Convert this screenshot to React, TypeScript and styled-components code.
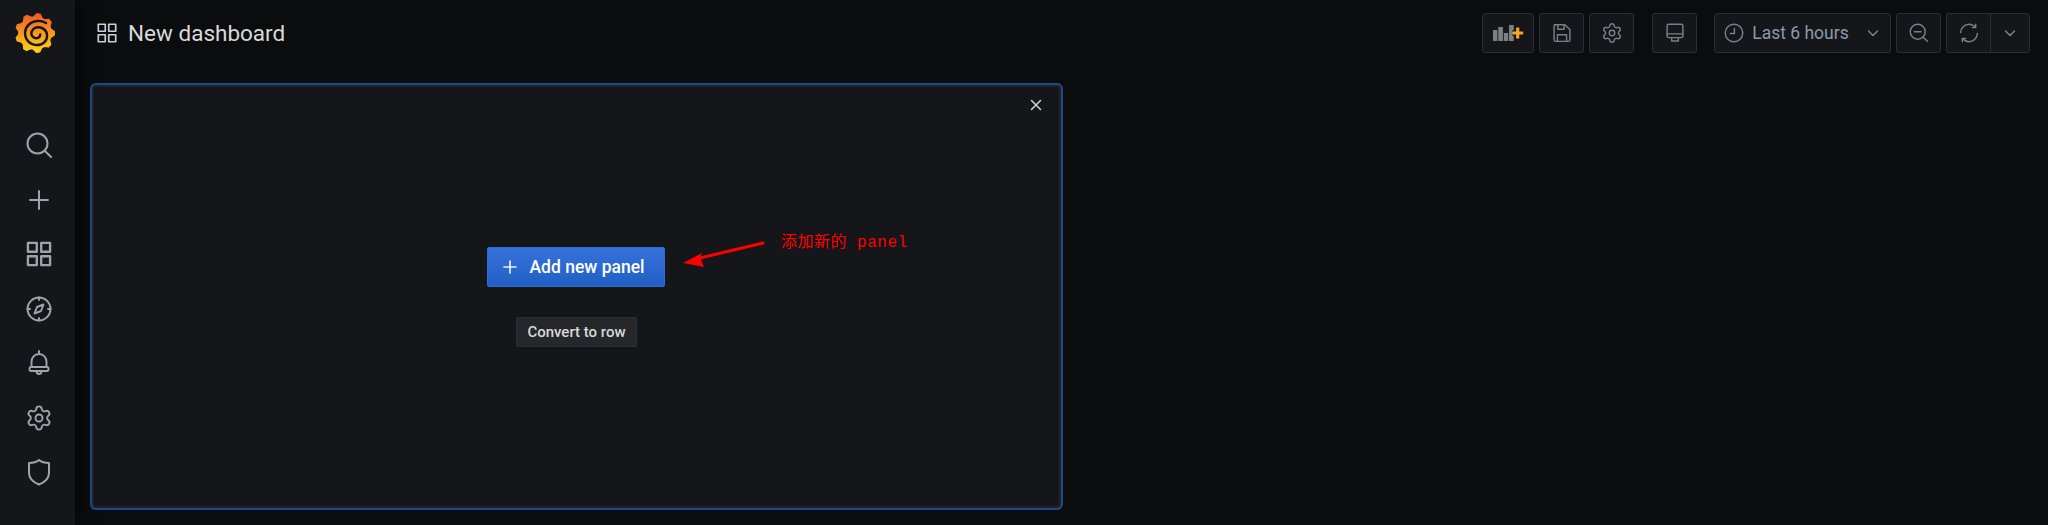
import React from "react";
import styled, { createGlobalStyle } from "styled-components";
import { Settings } from "lucide-react";

const Global = createGlobalStyle`
  html, body { margin: 0; padding: 0; height: 100%; background: #0b0c0e; overflow: hidden; }
  #root { height: 100%; }
  * { box-sizing: border-box; }
`;

const Page = styled.div`
  position: relative;
  display: flex;
  width: 2048px;
  height: 525px;
  overflow: hidden;
  background: #0b0c0e;
  font-family: Roboto, "Liberation Sans", sans-serif;
`;

const Sidebar = styled.nav`
  width: 75px;
  flex: none;
  background: #141619;
  box-shadow: 0 0 18px rgba(0, 0, 0, 0.75);
  display: flex;
  flex-direction: column;
  align-items: center;
  z-index: 1;
`;

const LogoSlot = styled.div`
  height: 118px;
  width: 100%;
  padding: 12px 0 0 15px;
  color: #141619;
`;

const NavItem = styled.div`
  width: 100%;
  height: 54.5px;
  display: flex;
  align-items: center;
  justify-content: center;
  padding-left: 3px;
  color: #9fa4ac;
`;

const Main = styled.main`
  flex: 1;
  min-width: 0;
  display: flex;
  flex-direction: column;
`;

const Header = styled.header`
  height: 83px;
  flex: none;
  display: flex;
  align-items: flex-start;
  justify-content: space-between;
  padding: 13px 18px 0 21px;
`;

const TitleBlock = styled.div`
  display: flex;
  align-items: center;
  gap: 10px;
  height: 40px;
  color: #c7d0d9;
`;

const Title = styled.h1`
  margin: 0;
  font-size: 22.5px;
  font-weight: 400;
  color: #d8d9da;
  line-height: 26px;
`;

const Toolbar = styled.div`
  display: flex;
  align-items: center;
  height: 40px;
`;

const ToolGroup = styled.div<{ $after?: number }>`
  display: flex;
  gap: 5px;
  margin-right: ${(p) => p.$after ?? 0}px;
`;

const ToolButton = styled.button<{ $w: number }>`
  width: ${(p) => p.$w}px;
  height: 40px;
  padding: 0;
  display: flex;
  align-items: center;
  justify-content: center;
  gap: 8px;
  background: #141619;
  border: 1px solid #2c2e33;
  border-radius: 3px;
  color: #7b8087;
  font-family: inherit;
`;

const Joined = styled.div`
  display: flex;
`;

const JoinedLeft = styled(ToolButton)`
  border-radius: 3px 0 0 3px;
  border-right: 0;
`;

const JoinedRight = styled(ToolButton)`
  border-radius: 0 3px 3px 0;
`;

const TimeLabel = styled.span`
  font-size: 17.5px;
  font-weight: 400;
  color: #8d9aab;
  margin-right: 8px;
`;

const Content = styled.div`
  padding-left: 15px;
`;

const Panel = styled.section`
  width: 973px;
  height: 427px;
  background: #141619;
  border-radius: 6px;
  box-shadow: inset 0 0 0 2px #1b4a8e, inset 0 0 0 4px #202226;
  padding: 12px 21px 0 0;
  display: flex;
  flex-direction: column;
  align-items: center;
`;

const CloseRow = styled.div`
  align-self: flex-end;
  height: 20px;
  display: flex;
  align-items: center;
  color: #c7d0d9;
`;

const AddButton = styled.button`
  margin: 132px 0 0 19px;
  width: 178px;
  height: 40px;
  display: flex;
  align-items: center;
  gap: 12px;
  padding: 0 0 0 14px;
  border: 1px solid #2f6bd0;
  border-radius: 2px;
  background: linear-gradient(180deg, #3871dc 0%, #1f60c4 100%);
  color: #fff;
  font-family: inherit;
  font-size: 17.5px;
  font-weight: 500;
  white-space: nowrap;
`;

const RowButton = styled.button`
  margin: 30px 0 0 21px;
  width: 121px;
  height: 30px;
  padding: 0;
  border: 1px solid #2c2e33;
  border-radius: 2px;
  background: #25272b;
  color: #d8d9da;
  font-family: inherit;
  font-size: 15px;
  font-weight: 500;
  white-space: nowrap;
`;

const Note = styled.span`
  position: absolute;
  left: 781px;
  top: 233px;
  color: #f00;
  font-family: "Liberation Mono", "Noto Sans CJK SC", monospace;
  font-size: 16px;
  font-weight: 400;
  line-height: 20px;
  letter-spacing: 0.5px;
  white-space: nowrap;
`;

const Arrow = styled.svg`
  position: absolute;
  left: 676px;
  top: 236px;
`;

const I = ({ s = 24, children }: { s?: number; children: React.ReactNode }) => (
  <svg width={s} height={s} viewBox="0 0 24 24" fill="none" stroke="currentColor" strokeWidth="1.7" strokeLinecap="round" strokeLinejoin="round">
    {children}
  </svg>
);

const gearPoints = (() => {
  const teeth = 9;
  const pts: string[] = [];
  for (let i = 0; i < teeth * 4; i++) {
    const a = (i / (teeth * 4)) * Math.PI * 2 - Math.PI / 2 + 0.1;
    const r = i % 4 === 0 || i % 4 === 1 ? 18.5 : 15.5;
    pts.push(`${(19 + r * Math.cos(a)).toFixed(2)},${(20 + r * Math.sin(a)).toFixed(2)}`);
  }
  return pts.join(" ");
})();

const Logo = () => (
  <svg width="40" height="42" viewBox="0 0 38 40" style={{ display: "block" }}>
    <defs>
      <linearGradient id="gf" x1="0" y1="1" x2="0" y2="0">
        <stop offset="0" stopColor="#fcd21f" />
        <stop offset="0.4" stopColor="#fba41c" />
        <stop offset="1" stopColor="#f05a28" />
      </linearGradient>
    </defs>
    <polygon points={gearPoints} fill="url(#gf)" stroke="url(#gf)" strokeWidth="1.2" strokeLinejoin="round" />
    <path d="M29.5 10.5 C27 9 24 8.3 21 8.5 C14.5 9 9.5 14 9.5 20 C9.5 26.5 14.5 31.5 21 31.5 C26.5 31.5 30.5 27.5 30.5 22.5 C30.5 17.5 26 14 21.5 14.5 C18 15 15.5 17.5 15.5 20.5 C15.5 23 18 25.2 20.5 25 C22.5 25 24 23.5 24 21.5" fill="none" stroke="currentColor" strokeWidth="2.3" strokeLinecap="round" />
  </svg>
);

const Chevron = ({ s = 16 }: { s?: number }) => (
  <svg width={s} height={s} viewBox="0 0 16 16" fill="none" stroke="currentColor" strokeWidth="1.6" strokeLinecap="round" strokeLinejoin="round">
    <path d="M3.5 6 L8 10.5 L12.5 6" />
  </svg>
);

const GridIcon = ({ s, w }: { s: number; w: number }) => (
  <svg width={s} height={s} viewBox="0 0 24 24" fill="none" stroke="currentColor" strokeWidth={w} strokeLinejoin="round">
    <rect x="2.5" y="2.5" width="7.6" height="7.6" />
    <rect x="13.9" y="2.5" width="7.6" height="7.6" />
    <rect x="2.5" y="13.9" width="7.6" height="7.6" />
    <rect x="13.9" y="13.9" width="7.6" height="7.6" />
  </svg>
);

const navIcons = [
  <svg key="s" width="28" height="28" viewBox="0 0 28 28" fill="none" stroke="currentColor" strokeWidth="2" strokeLinecap="round"><circle cx="12.5" cy="12.5" r="10" /><path d="M20 20 L26 26" /></svg>,
  <svg key="p" width="22" height="22" viewBox="0 0 22 22" fill="none" stroke="currentColor" strokeWidth="2" strokeLinecap="round"><path d="M11 2 V20 M2 11 H20" /></svg>,
  <GridIcon key="g" s={28} w={2} />,
  <svg key="c" width="26" height="26" viewBox="0 0 26 26" fill="none" stroke="currentColor" strokeWidth="1.9" strokeLinecap="round" strokeLinejoin="round"><circle cx="13" cy="13" r="11.5" /><path d="M17.5 8.5 L15 15 L8.5 17.5 L11 11 Z" /><path d="M13 1.5 V4 M13 22 V24.5 M1.5 13 H4 M22 13 H24.5" /></svg>,
  <svg key="b" width="24" height="26" viewBox="0 0 24 26" fill="none" stroke="currentColor" strokeWidth="1.9" strokeLinecap="round" strokeLinejoin="round"><path d="M12 1 V4 M4.5 17 V12 C4.5 7.5 7.5 4 12 4 C16.5 4 19.5 7.5 19.5 12 V17 M4 17 H20 C22 17 22 21 20 21 H4 C2 21 2 17 4 17 Z M9.5 21 C9.5 25 14.5 25 14.5 21" /></svg>,
  <Settings key="st" size={28} strokeWidth={1.6} />,
  <svg key="sh" width="24" height="28" viewBox="0 0 24 28" fill="none" stroke="currentColor" strokeWidth="2" strokeLinejoin="round"><path d="M12 2 C9 4.5 6 5 2 5 V15 C2 20.5 7 24.5 12 26.5 C17 24.5 22 20.5 22 15 V5 C18 5 15 4.5 12 2 Z" /></svg>,
];

export default function App() {
  return (
    <Page>
      <Global />
      <Sidebar>
        <LogoSlot><Logo /></LogoSlot>
        {navIcons.map((ic, i) => (
          <NavItem key={i}>{ic}</NavItem>
        ))}
      </Sidebar>
      <Main>
        <Header>
          <TitleBlock>
            <GridIcon s={22} w={1.8} />
            <Title>New dashboard</Title>
          </TitleBlock>
          <Toolbar>
            <ToolGroup $after={18}>
              <ToolButton $w={52}>
                <svg width="32" height="18" viewBox="0 0 32 18">
                  <g fill="#7b8087">
                    <rect x="1" y="6" width="4.4" height="11" />
                    <rect x="6.3" y="3" width="4.6" height="14" />
                    <rect x="11.8" y="9" width="4.4" height="8" />
                    <rect x="17" y="1" width="4.8" height="16" />
                  </g>
                  <path d="M25.7 3.5 V14.5 M20.2 9 H31.2" stroke="#141619" strokeWidth="5.5" />
                  <path d="M25.7 3.5 V14.5 M20.2 9 H31.2" stroke="#f5a623" strokeWidth="3.2" />
                </svg>
              </ToolButton>
              <ToolButton $w={45}>
                <I s={20}><path d="M3 2 H15.5 L21.5 8 V20 C21.5 21 21 22 19.5 22 H4.5 C3 22 2.5 21 2.5 20 V4 C2.5 3 3 2 4.5 2" /><path d="M7 2.2 V7.5 H14.5 V2.2 M6.5 22 V14 H17.5 V22" /></I>
              </ToolButton>
              <ToolButton $w={45}><Settings size={22} strokeWidth={1.6} /></ToolButton>
            </ToolGroup>
            <ToolGroup $after={17}>
              <ToolButton $w={45}>
                <I s={20}><rect x="2.5" y="1.5" width="19" height="16" rx="2" /><path d="M2.5 13 H21.5 M8 17.5 V21.5 H16 V17.5" /></I>
              </ToolButton>
            </ToolGroup>
            <ToolGroup>
              <ToolButton $w={177}>
                <I s={20}><circle cx="12" cy="12" r="10.5" /><path d="M12.5 6.5 V12.5 H7.5" /></I>
                <TimeLabel>Last 6 hours</TimeLabel>
                <Chevron />
              </ToolButton>
              <ToolButton $w={45}>
                <I s={20}><circle cx="10.5" cy="10.5" r="9" /><path d="M6.5 10.5 H14.5 M17 17 L22 22" /></I>
              </ToolButton>
              <Joined>
                <JoinedLeft $w={44}>
                  <I s={20}><path d="M20 5.5 V1.5 M20 5.5 H16 M20 5.5 C18 3 15 1.5 12 1.5 C6.5 1.5 2 6 2 11.5" /><path d="M4 18.5 V22.5 M4 18.5 H8 M4 18.5 C6 21 9 22.5 12 22.5 C17.5 22.5 22 18 22 12.5" /></I>
                </JoinedLeft>
                <JoinedRight $w={40}><Chevron /></JoinedRight>
              </Joined>
            </ToolGroup>
          </Toolbar>
        </Header>
        <Content>
          <Panel>
            <CloseRow>
              <svg width="12" height="12" viewBox="0 0 12 12" stroke="currentColor" strokeWidth="1.6" strokeLinecap="round"><path d="M1.5 1.5 L10.5 10.5 M10.5 1.5 L1.5 10.5" /></svg>
            </CloseRow>
            <AddButton>
              <svg width="16" height="16" viewBox="0 0 16 16" stroke="#e6eefb" strokeWidth="1.7" strokeLinecap="round"><path d="M8 2 V14 M2 8 H14" /></svg>
              Add new panel
            </AddButton>
            <RowButton>Convert to row</RowButton>
          </Panel>
        </Content>
      </Main>
      <Arrow width="92" height="32" viewBox="0 0 92 32">
        <path d="M87 7 L24 22" stroke="#f00" strokeWidth="3" strokeLinecap="round" />
        <path d="M7 27 L26 17 L24 22 L28 31 Z" fill="#f00" />
      </Arrow>
      <Note>添加新的 panel</Note>
    </Page>
  );
}
